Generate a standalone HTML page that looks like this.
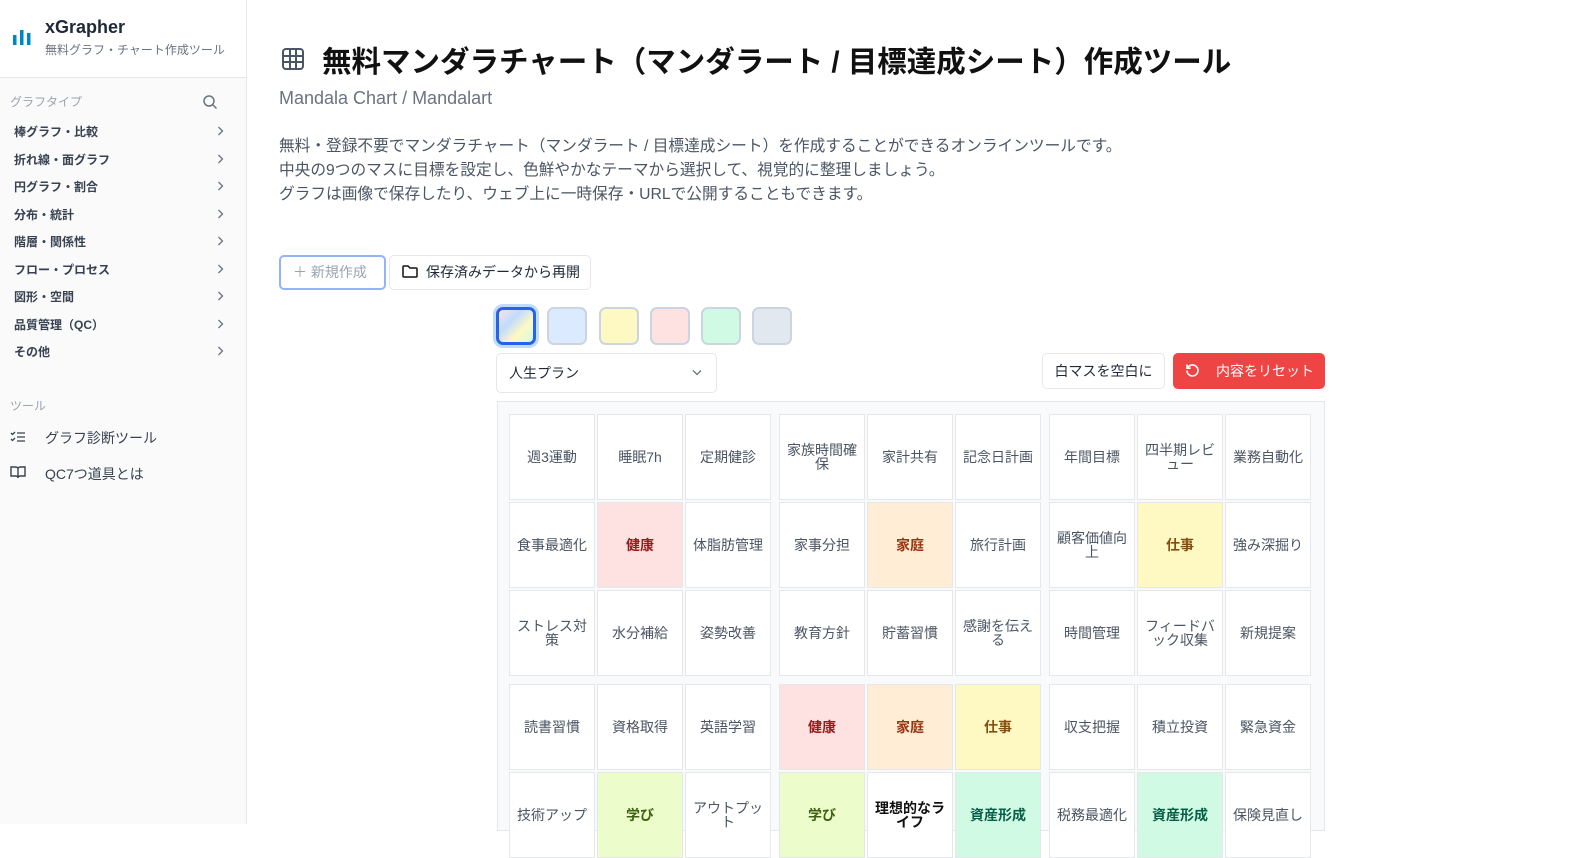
<!DOCTYPE html><html><head><meta charset="utf-8"><style>
*{box-sizing:border-box;margin:0;padding:0}
body{width:1590px;height:824px;overflow:hidden;background:#fff;font-family:"Liberation Sans","Noto Sans CJK JP",sans-serif;position:relative}
.sb{position:absolute;left:0;top:0;width:247px;height:824px;background:#fafafa;border-right:1px solid #e5e7eb}
.hd{height:78px;background:#fff;border-bottom:1px solid #e5e7eb;position:relative}
.nav{position:absolute;left:14px;font-size:12px;color:#374151;font-weight:bold;width:210px}
.nav svg{position:absolute;right:0;top:3px}
.a{position:absolute}
.c{position:absolute;width:86px;height:86px;background:#fff;border:1px solid #e5e7eb;display:flex;align-items:center;justify-content:center;text-align:center;font-size:14px;color:#4b5563;line-height:14px;padding:4px}
.b{font-weight:bold}
.r{background:#fee2e2;color:#991b1b;font-weight:bold}
.o{background:#ffedd5;color:#9a3412;font-weight:bold}
.y{background:#fef9c3;color:#854d0e;font-weight:bold}
.l{background:#ecfccb;color:#3f6212;font-weight:bold}
.g{background:#d1fae5;color:#065f46;font-weight:bold}
.sw{position:absolute;top:307px;width:40px;height:38px;border-radius:7px;border:2px solid #cbd5e1}
</style></head><body>
<svg width="0" height="0" style="position:absolute"><defs><symbol id="ch" viewBox="0 0 7 10"><path d="M1.5 1l4 4-4 4" fill="none" stroke="#6b7280" stroke-width="1.3"/></symbol></defs></svg>
<div class="sb">
<div class="hd">
<svg class="a" style="left:12px;top:27px" width="20" height="18"><rect x="1" y="8" width="3.5" height="10" fill="#0284c7"/><rect x="8" y="3" width="3.5" height="15" fill="#0284c7"/><rect x="15" y="6" width="3.5" height="12" fill="#0284c7"/></svg>
<div class="a" style="left:45px;top:17px;font-size:18px;font-weight:bold;color:#1f2937">xGrapher</div>
<div class="a" style="left:45px;top:41px;font-size:12px;color:#6b7280">無料グラフ・チャート作成ツール</div>
</div>
<div class="a" style="left:10px;top:93px;font-size:12px;color:#9ca3af">グラフタイプ</div>
<svg class="a" style="left:202px;top:94px" width="16" height="16" fill="none" stroke="#6b7280" stroke-width="1.5"><circle cx="7" cy="7" r="5"/><path d="M11 11l3.5 3.5"/></svg>
<div class="nav" style="top:123px">棒グラフ・比較<svg width="7" height="10"><use href="#ch"/></svg></div>
<div class="nav" style="top:151px">折れ線・面グラフ<svg width="7" height="10"><use href="#ch"/></svg></div>
<div class="nav" style="top:178px">円グラフ・割合<svg width="7" height="10"><use href="#ch"/></svg></div>
<div class="nav" style="top:206px">分布・統計<svg width="7" height="10"><use href="#ch"/></svg></div>
<div class="nav" style="top:233px">階層・関係性<svg width="7" height="10"><use href="#ch"/></svg></div>
<div class="nav" style="top:261px">フロー・プロセス<svg width="7" height="10"><use href="#ch"/></svg></div>
<div class="nav" style="top:288px">図形・空間<svg width="7" height="10"><use href="#ch"/></svg></div>
<div class="nav" style="top:316px">品質管理（QC）<svg width="7" height="10"><use href="#ch"/></svg></div>
<div class="nav" style="top:343px">その他<svg width="7" height="10"><use href="#ch"/></svg></div>
<div class="a" style="left:10px;top:397px;font-size:12px;color:#9ca3af">ツール</div>
<svg class="a" style="left:10px;top:430px" width="16" height="14" fill="none" stroke="#374151" stroke-width="1.3"><path d="M1 3l1.5 1.5L5 2M1 9l1.5 1.5L5 8M7 3h8M7 7h8M7 11h8"/></svg>
<div class="a" style="left:45px;top:428px;font-size:14px;color:#374151">グラフ診断ツール</div>
<svg class="a" style="left:10px;top:465px" width="16" height="14" fill="none" stroke="#374151" stroke-width="1.4"><path d="M1 2h5a2 2 0 0 1 2 2v9a2 2 0 0 0-2-2H1zM15 2h-5a2 2 0 0 0-2 2v9a2 2 0 0 1 2-2h5z"/></svg>
<div class="a" style="left:45px;top:464px;font-size:14px;color:#374151">QC7つ道具とは</div>
</div>

<svg class="a" style="left:281px;top:47px" width="24" height="24" fill="none" stroke="#4b5563" stroke-width="2"><rect x="2" y="2" width="20" height="20" rx="3"/><path d="M2 9h20M2 15h20M9 2v20M15 2v20"/></svg>
<div class="a" style="left:322px;top:39px;font-size:29.5px;font-weight:bold;color:#111">無料マンダラチャート（マンダラート / 目標達成シート）作成ツール</div>
<div class="a" style="left:279px;top:88px;font-size:18px;color:#6b7280">Mandala Chart / Mandalart</div>
<div class="a" style="left:279px;top:135px;font-size:15.7px;color:#4b5563;line-height:24px">無料・登録不要でマンダラチャート（マンダラート / 目標達成シート）を作成することができるオンラインツールです。<br>中央の9つのマスに目標を設定し、色鮮やかなテーマから選択して、視覚的に整理しましょう。<br>グラフは画像で保存したり、ウェブ上に一時保存・URLで公開することもできます。</div>

<div class="a" style="left:279px;top:255px;width:107px;height:35px;border:2px solid #93b4f5;border-radius:5px;font-size:14px;color:#9ca3af;line-height:31px;padding-left:12px">＋ 新規作成</div>
<div class="a" style="left:389px;top:255px;width:202px;height:35px;border:1px solid #e5e7eb;border-radius:5px;font-size:14px;color:#1f2937;line-height:33px;padding-left:36px">保存済みデータから再開</div>
<svg class="a" style="left:402px;top:264px" width="16" height="15" fill="none" stroke="#111" stroke-width="1.5"><path d="M1 3a1 1 0 0 1 1-1h4l2 2h6a1 1 0 0 1 1 1v7a1 1 0 0 1-1 1H2a1 1 0 0 1-1-1z"/></svg>

<div class="sw" style="left:496px;border:3px solid #2563eb;box-shadow:0 0 0 3px #bfdbfe;background:linear-gradient(135deg,#fde2e2,#bfdbfe 35%,#fef9c3 65%,#d1fae5)"></div>
<div class="sw" style="left:547px;background:#dbeafe"></div>
<div class="sw" style="left:599px;background:#fef9c3"></div>
<div class="sw" style="left:650px;background:#fee2e2"></div>
<div class="sw" style="left:701px;background:#d1fae5"></div>
<div class="sw" style="left:752px;background:#e2e8f0"></div>

<div class="a" style="left:496px;top:353px;width:221px;height:40px;border:1px solid #e5e7eb;border-radius:5px;font-size:14px;color:#1f2937;line-height:38px;padding-left:12px">人生プラン<svg style="position:absolute;right:14px;top:15px" width="10" height="7" fill="none" stroke="#6b7280" stroke-width="1.3"><path d="M1 1.5l4 4 4-4"/></svg></div>
<div class="a" style="left:1042px;top:353px;width:123px;height:36px;border:1px solid #e5e7eb;border-radius:5px;font-size:14px;color:#1f2937;line-height:34px;text-align:center">白マスを空白に</div>
<div class="a" style="left:1173px;top:353px;width:152px;height:36px;background:#ef4444;border-radius:5px;font-size:14px;color:#fff;line-height:36px;padding-left:43px">内容をリセット</div>
<svg class="a" style="left:1185px;top:363px" width="15" height="15" fill="none" stroke="#fff" stroke-width="1.6"><path d="M2 7.5a5.5 5.5 0 1 0 1.6-3.9L2 5.2M2 1.5v3.7h3.7"/></svg>

<div class="a" style="left:497px;top:401px;width:828px;height:430px;background:#f8fafc;border:1px solid #e5e7eb"></div>
<div class="c" style="left:509px;top:414px">週3運動</div><div class="c" style="left:597px;top:414px">睡眠7h</div><div class="c" style="left:685px;top:414px">定期健診</div>
<div class="c" style="left:779px;top:414px">家族時間確保</div><div class="c" style="left:867px;top:414px">家計共有</div><div class="c" style="left:955px;top:414px">記念日計画</div>
<div class="c" style="left:1049px;top:414px">年間目標</div><div class="c" style="left:1137px;top:414px">四半期レビュー</div><div class="c" style="left:1225px;top:414px">業務自動化</div>

<div class="c" style="left:509px;top:502px">食事最適化</div><div class="c r" style="left:597px;top:502px">健康</div><div class="c" style="left:685px;top:502px">体脂肪管理</div>
<div class="c" style="left:779px;top:502px">家事分担</div><div class="c o" style="left:867px;top:502px">家庭</div><div class="c" style="left:955px;top:502px">旅行計画</div>
<div class="c" style="left:1049px;top:502px">顧客価値向上</div><div class="c y" style="left:1137px;top:502px">仕事</div><div class="c" style="left:1225px;top:502px">強み深掘り</div>

<div class="c" style="left:509px;top:590px">ストレス対策</div><div class="c" style="left:597px;top:590px">水分補給</div><div class="c" style="left:685px;top:590px">姿勢改善</div>
<div class="c" style="left:779px;top:590px">教育方針</div><div class="c" style="left:867px;top:590px">貯蓄習慣</div><div class="c" style="left:955px;top:590px">感謝を伝える</div>
<div class="c" style="left:1049px;top:590px">時間管理</div><div class="c" style="left:1137px;top:590px">フィードバック収集</div><div class="c" style="left:1225px;top:590px">新規提案</div>

<div class="c" style="left:509px;top:684px">読書習慣</div><div class="c" style="left:597px;top:684px">資格取得</div><div class="c" style="left:685px;top:684px">英語学習</div>
<div class="c r" style="left:779px;top:684px">健康</div><div class="c o" style="left:867px;top:684px">家庭</div><div class="c y" style="left:955px;top:684px">仕事</div>
<div class="c" style="left:1049px;top:684px">収支把握</div><div class="c" style="left:1137px;top:684px">積立投資</div><div class="c" style="left:1225px;top:684px">緊急資金</div>

<div class="c" style="left:509px;top:772px">技術アップ</div><div class="c l" style="left:597px;top:772px">学び</div><div class="c" style="left:685px;top:772px">アウトプット</div>
<div class="c l" style="left:779px;top:772px">学び</div><div class="c b" style="left:867px;top:772px;color:#111">理想的なライフ</div><div class="c g" style="left:955px;top:772px">資産形成</div>
<div class="c" style="left:1049px;top:772px">税務最適化</div><div class="c g" style="left:1137px;top:772px">資産形成</div><div class="c" style="left:1225px;top:772px">保険見直し</div>
</body></html>
